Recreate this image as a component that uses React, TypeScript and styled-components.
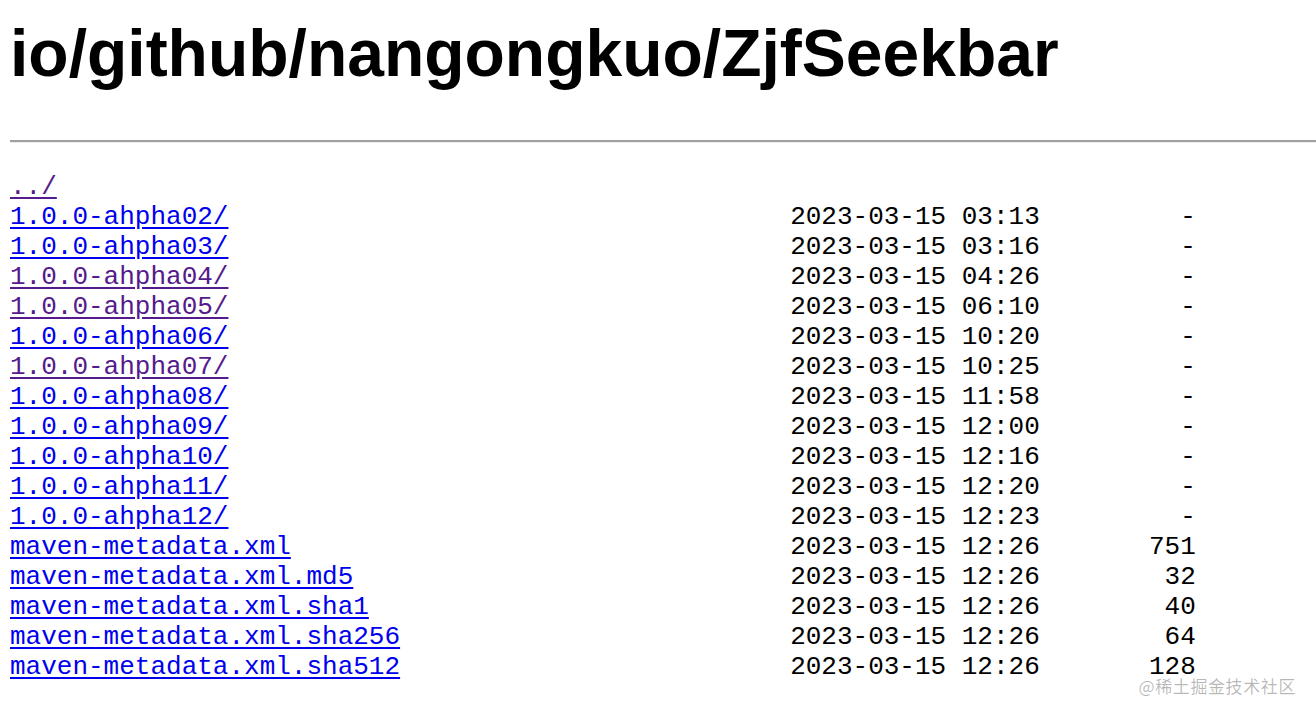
import React from 'react';
import styled, { createGlobalStyle } from 'styled-components';

const GlobalStyle = createGlobalStyle`
  html, body {
    margin: 0;
    padding: 0;
    background: #fff;
  }
`;

const Page = styled.div`
  position: relative;
  padding-left: 10px;
  height: 718px;
  overflow: hidden;
`;

const Title = styled.h1`
  margin: 0;
  padding-top: 15px;
  font-family: 'Liberation Sans', Arial, sans-serif;
  font-weight: bold;
  font-size: 66px;
  line-height: 76px;
  color: #000;
`;

const Rule = styled.hr`
  margin: 49px 0 29px;
  border: 0;
  border-top: 2px solid #a0a0a0;
  border-bottom: 1px solid #ededed;
  height: 0;
`;

const Listing = styled.pre`
  margin: 0;
  font-family: 'Liberation Mono', 'Courier New', monospace;
  font-size: 26px;
  line-height: 30px;
  color: #000;
`;

const Entry = styled.a<{ $visited?: boolean }>`
  color: ${(p) => (p.$visited ? '#551a8b' : '#0000ee')};
  text-decoration: underline;
  text-underline-offset: 3px;
`;

const Watermark = styled.div`
  position: absolute;
  right: 20px;
  bottom: 20px;
  font-family: 'Noto Sans CJK SC', 'Liberation Sans', sans-serif;
  font-size: 17px;
  color: rgba(0, 0, 0, 0.28);
  letter-spacing: 0.6px;
`;

interface Item {
  name: string;
  date?: string;
  size?: string;
  visited?: boolean;
}

const items: Item[] = [
  { name: '../', visited: true },
  { name: '1.0.0-ahpha02/', date: '2023-03-15 03:13', size: '-' },
  { name: '1.0.0-ahpha03/', date: '2023-03-15 03:16', size: '-' },
  { name: '1.0.0-ahpha04/', date: '2023-03-15 04:26', size: '-', visited: true },
  { name: '1.0.0-ahpha05/', date: '2023-03-15 06:10', size: '-', visited: true },
  { name: '1.0.0-ahpha06/', date: '2023-03-15 10:20', size: '-' },
  { name: '1.0.0-ahpha07/', date: '2023-03-15 10:25', size: '-', visited: true },
  { name: '1.0.0-ahpha08/', date: '2023-03-15 11:58', size: '-' },
  { name: '1.0.0-ahpha09/', date: '2023-03-15 12:00', size: '-' },
  { name: '1.0.0-ahpha10/', date: '2023-03-15 12:16', size: '-' },
  { name: '1.0.0-ahpha11/', date: '2023-03-15 12:20', size: '-' },
  { name: '1.0.0-ahpha12/', date: '2023-03-15 12:23', size: '-' },
  { name: 'maven-metadata.xml', date: '2023-03-15 12:26', size: '751' },
  { name: 'maven-metadata.xml.md5', date: '2023-03-15 12:26', size: '32' },
  { name: 'maven-metadata.xml.sha1', date: '2023-03-15 12:26', size: '40' },
  { name: 'maven-metadata.xml.sha256', date: '2023-03-15 12:26', size: '64' },
  { name: 'maven-metadata.xml.sha512', date: '2023-03-15 12:26', size: '128' },
];

export default function App() {
  return (
    <Page>
      <GlobalStyle />
      <Title>io/github/nangongkuo/ZjfSeekbar</Title>
      <Rule />
      <Listing>
        {items.map((item, i) => (
          <React.Fragment key={item.name}>
            <Entry href="#" $visited={item.visited}>
              {item.name}
            </Entry>
            {item.date
              ? ' '.repeat(50 - item.name.length) + item.date + (item.size || '').padStart(10)
              : ''}
            {i < items.length - 1 ? '\n' : ''}
          </React.Fragment>
        ))}
      </Listing>
      <Watermark>@稀土掘金技术社区</Watermark>
    </Page>
  );
}
